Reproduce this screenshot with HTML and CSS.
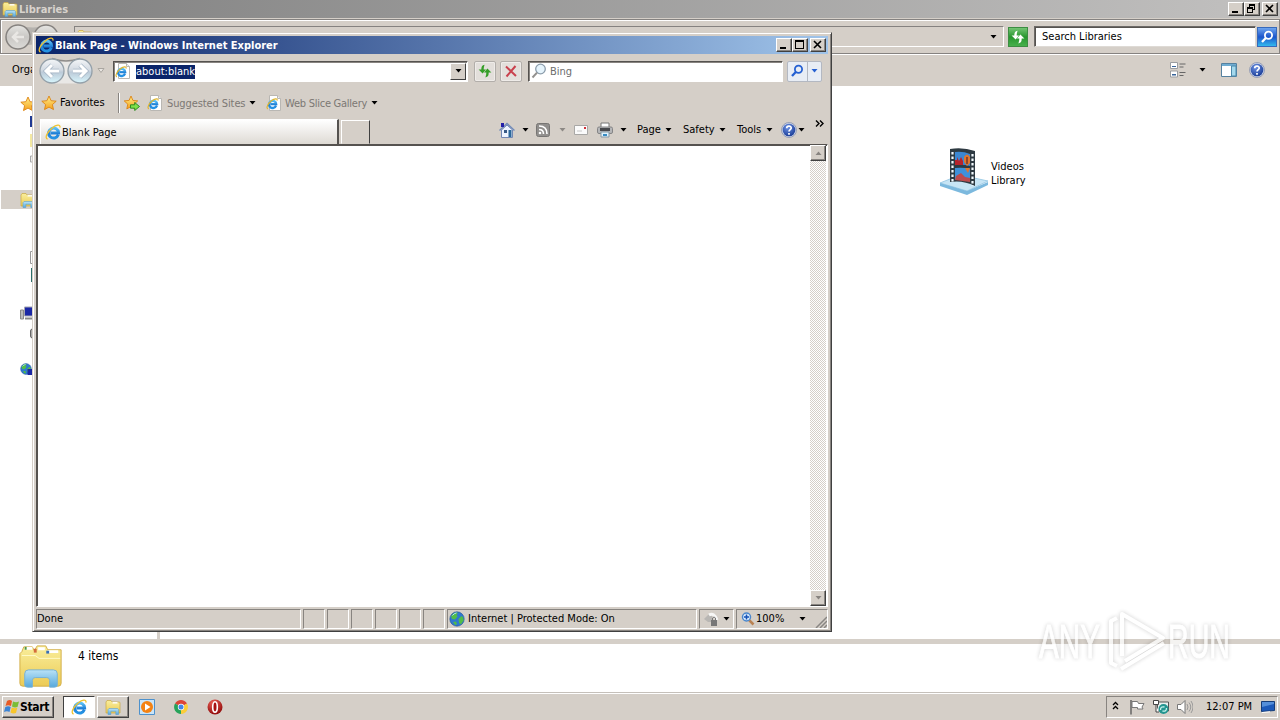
FILE: index.html
```
<!DOCTYPE html>
<html lang="en">
<head>
    <meta charset="UTF-8">
    <meta name="viewport" content="width=device-width, initial-scale=1.0">
    <title>Desktop</title>
    <link rel="stylesheet" href="styles.css">
</head>
<body>
    <!-- Shared icons -->
    <svg class="defs" width="0" height="0">
        <defs>
            <linearGradient id="gOrb" x1="0" y1="0" x2="0" y2="1">
                <stop offset="0" stop-color="#f4f6f8"/><stop offset=".45" stop-color="#d3dae2"/><stop offset=".55" stop-color="#bccad8"/><stop offset="1" stop-color="#d8f6fd"/>
            </linearGradient>
            <linearGradient id="gGray" x1="0" y1="0" x2="0" y2="1">
                <stop offset="0" stop-color="#e6e5e3"/><stop offset=".5" stop-color="#c9c7c4"/><stop offset="1" stop-color="#dcdbd8"/>
            </linearGradient>
            <linearGradient id="gStar" x1="0" y1="0" x2="0" y2="1">
                <stop offset="0" stop-color="#fff08a"/><stop offset="1" stop-color="#f5a01c"/>
            </linearGradient>
            <linearGradient id="gFolder" x1="0" y1="0" x2="0" y2="1">
                <stop offset="0" stop-color="#f9ee9c"/><stop offset="1" stop-color="#eccb55"/>
            </linearGradient>
            <linearGradient id="gBlue" x1="0" y1="0" x2="0" y2="1">
                <stop offset="0" stop-color="#b9e2f7"/><stop offset="1" stop-color="#57a9dc"/>
            </linearGradient>
            <linearGradient id="gE" x1="0" y1="0" x2="0" y2="1">
                <stop offset="0" stop-color="#5cc0f4"/><stop offset=".55" stop-color="#1f7fd6"/><stop offset="1" stop-color="#2593e4"/>
            </linearGradient>
            <radialGradient id="gHelp" cx=".4" cy=".3" r=".8">
                <stop offset="0" stop-color="#6d92e4"/><stop offset="1" stop-color="#12348f"/>
            </radialGradient>
            <radialGradient id="gRed" cx=".4" cy=".25" r=".8">
                <stop offset="0" stop-color="#ee6258"/><stop offset="1" stop-color="#8c0606"/>
            </radialGradient>

            <symbol id="ie" viewBox="0 0 16 16">
                <path d="M13.300 10.800A5 5 0 1 1 13.600 8.900H5.500" fill="none" stroke="url(#gE)" stroke-width="3"/>
                <path d="M2.600 15C-.8 14.200 2.400 7.600 7.200 3.900 11 .9 15.700-.2 14.900 3.600" fill="none" stroke="#f0c22e" stroke-width="1.300"/>
            </symbol>
            <symbol id="iepage" viewBox="0 0 16 16">
                <path d="M3.500.5h8l3 3v12h-11z" fill="#fff" stroke="#b9b7b3"/>
                <path d="M11.500.5v3h3" fill="#eee" stroke="#b9b7b3"/>
                <path d="M10 10.600A3.600 3.600 0 1 1 10.200 9.200H4.500" fill="none" stroke="url(#gE)" stroke-width="2.300"/>
                <path d="M1.800 14C-.2 12.800 2 8.400 5.400 5.800 8.400 3.600 11.800 3 11 5.600" fill="none" stroke="#dfb42c" stroke-width="1.100"/>
            </symbol>
            <symbol id="star" viewBox="0 0 16 16">
                <path d="M8 1l2.100 4.700 5.100.5-3.800 3.400 1.100 5L8 12.100l-4.500 2.500 1.100-5L.8 6.200l5.100-.5z" fill="url(#gStar)" stroke="#dd8313" stroke-width=".9"/>
            </symbol>
            <symbol id="staradd" viewBox="0 0 16 16">
                <path d="M7 1l1.900 4.400 4.800.5-3.600 3.300 1 4.700L7 11.600l-4.200 2.300 1-4.700L.2 5.900l4.900-.5z" fill="url(#gStar)" stroke="#dd8313" stroke-width=".9"/>
                <path d="M6.500 9.800h4.200V7.500l4.800 4-4.800 4v-2.300H6.500z" fill="#7ee04a" stroke="#23861d" stroke-width=".9"/>
            </symbol>
            <symbol id="folder" viewBox="0 0 16 16">
                <path d="M1 14V3l1-1.500h4L7 3h7.600L15 4v10z" fill="url(#gFolder)" stroke="#c9a844" stroke-width=".7"/>
                <path d="M7.500 3.800h5" stroke="#fff" stroke-width="1.400"/>
                <path d="M3 15.500v-4.800L4 9.500h8.600l1 1.200v4.800h-2.800v-3.200H5.800v3.200z" fill="url(#gBlue)" stroke="#5a9ecb" stroke-width=".6"/>
            </symbol>
            <symbol id="help" viewBox="0 0 16 16">
                <circle cx="8" cy="8" r="7.500" fill="#c9d2e6" stroke="#8a93ad" stroke-width=".8"/>
                <circle cx="8" cy="8" r="6.300" fill="url(#gHelp)"/>
                <path d="M5.700 6.200C5.800 3.400 10.400 3.600 10.200 6.200 10 7.700 8 7.800 8 9.600M8 11v1.700" fill="none" stroke="#fff" stroke-width="1.700"/>
            </symbol>
            <symbol id="globe" viewBox="0 0 16 16">
                <circle cx="8" cy="8" r="7.200" fill="#2f78d0" stroke="#1d4f94" stroke-width=".6"/>
                <path d="M2 5l3-3 4-.6L7.600 4l1 1.600L6 8.400 3 8zM9.500 8l3-3 1.600 1.200.6 3-2.600 4-2-1zM4 11l3-.6 1 2.600-1.600 1.200z" fill="#51bd48"/>
                <path d="M3.500 4.500a6 6 0 0 1 4-2.600" stroke="#b7e4ff" fill="none"/>
            </symbol>
            <symbol id="down" viewBox="0 0 7 4"><path d="M.5 0h6L3.500 3.600z" fill="currentColor"/></symbol>
            <symbol id="lens" viewBox="0 0 16 16">
                <circle cx="9.500" cy="6.200" r="3.600" fill="none" stroke="currentColor" stroke-width="1.800"/>
                <path d="M6.800 9L3 13" stroke="currentColor" stroke-width="2.300"/>
            </symbol>
            <symbol id="swap" viewBox="0 0 16 16">
                <path d="M7.600 1.800C5 2 4.300 3.800 4.300 6.600H1.600l4 4 3.400-4H6.700C6.700 4.800 7 3.600 7.600 1.800z" fill="currentColor"/>
                <path d="M8.400 14.400c2.600-.2 3.300-2 3.300-4.800h2.700l-4-4-3.400 4h2.300c0 1.800-.3 3-.9 4.800z" fill="currentColor"/>
            </symbol>
            <symbol id="min" viewBox="0 0 14 12"><path d="M3 8h6v2H3z"/></symbol>
            <symbol id="max" viewBox="0 0 14 12"><path d="M2 1h9v9H2zM3 3v6h7V3z" fill-rule="evenodd"/></symbol>
            <symbol id="restore" viewBox="0 0 14 12"><path d="M4 1h6v6H8v3H2V4h2zM5 3v1h3v2h1V3zM3 6v3h4V6z" fill-rule="evenodd"/></symbol>
            <symbol id="close" viewBox="0 0 14 12"><path d="M3 2l7 7M10 2L3 9" stroke="#000" stroke-width="1.600"/></symbol>
        </defs>
    </svg>

    <div class="desktop">
        <!-- Libraries window -->
        <div class="explorer">
            <div class="ex-title">
                <svg class="i16"><use href="#folder"/></svg>
                <span>Libraries</span>
                <div class="win-buttons">
                    <i><svg><use href="#min"/></svg></i><i><svg><use href="#restore"/></svg></i><i><svg><use href="#close"/></svg></i>
                </div>
            </div>
            <div class="ex-nav">
                <svg class="ex-arrows" viewBox="0 0 60 28">
                    <path d="M14 2q15 5 30 0v22q-15-5-30 0z" fill="#b5b2ae"/>
                    <circle cx="14" cy="14" r="12" fill="url(#gGray)" stroke="#85827f" stroke-width="1.500"/>
                    <circle cx="42" cy="14" r="12" fill="url(#gGray)" stroke="#85827f" stroke-width="1.500"/>
                    <path d="M20 14H9M14 9l-5 5 5 5" fill="none" stroke="#e9e7e4" stroke-width="2.500"/>
                </svg>
                <div class="ex-address">
                    <svg class="i16"><use href="#folder"/></svg>
                    <svg class="drop"><use href="#down"/></svg>
                </div>
                <div class="ex-refresh"><svg class="i16"><use href="#swap"/></svg></div>
                <div class="ex-search">Search Libraries</div>
                <div class="ex-go"><svg class="i16"><use href="#lens"/></svg></div>
            </div>
            <div class="ex-toolbar">
                <span>Organize</span>
                <svg class="i16 view" viewBox="0 0 16 16">
                    <path d="M.5.500h7v6h-7zM.5 9h7v6h-7z" fill="#fff" stroke="#9b9da0"/>
                    <path d="M2 4h4v1H2zM2 12h4v1.500H2z" fill="#38649a"/>
                    <path d="M9.500 2h6M9.500 5h4M9.500 10.500h6M9.500 13.500h4" stroke="#666"/>
                </svg>
                <svg class="drop"><use href="#down"/></svg>
                <svg class="i16 pane" viewBox="0 0 16 16">
                    <path d="M.5 1.500h15v13H.5z" fill="#fff" stroke="#55819f"/>
                    <path d="M1 2h14v2H1z" fill="#6facd1"/><path d="M10.500 4h4.500v10h-4.500z" fill="#a4d9ed" stroke="#4a88aa"/>
                </svg>
                <svg class="i16"><use href="#help"/></svg>
            </div>
            <div class="ex-body">
                <div class="tree">
                    <div class="row fav"><svg class="i16"><use href="#star"/></svg></div>
                    <div class="row child"><svg viewBox="0 0 12 16"><path d="M0 2h12v11H0z" fill="#203a93"/></svg></div>
                    <div class="row child"><svg viewBox="0 0 12 16"><path d="M0 2h12v13H0z" fill="#f3e8a2"/></svg></div>
                    <div class="row child"><svg viewBox="0 0 12 16"><path d="M.5 6h11v6H.5z" fill="#eee" stroke="#aaa"/></svg></div>
                    <div class="row selected"><svg class="i16"><use href="#folder"/></svg></div>
                    <div class="row child docs"><svg viewBox="0 0 12 16"><path d="M.5 2.500h11v12H.5z" fill="#fff" stroke="#999"/></svg></div>
                    <div class="row child"><svg viewBox="0 0 12 16"><path d="M1 1h12v14H1z" fill="#2c6f6b"/></svg></div>
                    <div class="row computer"><svg class="i16" viewBox="0 0 16 16"><path d="M.5 5h3v9h-3z" fill="#bbb" stroke="#888"/><path d="M4.500 2h11v9h-11z" fill="#1a27a5" stroke="#a3a4b1"/><path d="M5 13.500h9" stroke="#888" stroke-width="2"/></svg></div>
                    <div class="row child"><svg viewBox="0 0 12 16"><rect x=".5" y="6" width="12" height="9" rx="2" fill="#aaa" stroke="#666"/></svg></div>
                    <div class="row network"><svg class="i12"><use href="#globe"/></svg><svg class="net" viewBox="0 0 8 8"><path d="M0 0h8v6H0z" fill="#1a27a5"/></svg></div>
                </div>
                <div class="files">
                    <div class="library">
                        <svg viewBox="0 0 48 48">
                            <path d="M0 35L20 27l28 6-21 10z" fill="#c7e5f5" stroke="#a0cde6"/>
                            <path d="M0 35l27 8v4L0 38zM27 43l21-9v3L27 47z" fill="#7cb9de"/>
                            <path d="M10 1q13-2 25 2v35q-12-6-25-4z" fill="#2e3a42"/>
                            <path d="M15 4q8-1 15 2v12q-7-2-15-1z" fill="#3c87d2"/>
                            <path d="M15 20q8-1 15 1v13q-7-3-15-2z" fill="#3f91da"/>
                            <path d="M15 12h2v-3l2 4 2-4 2 4v4h-8z" fill="#b6232c"/>
                            <path d="M24 9q3-5 6 0v6l-3 3-3-4zM25 20h5l-2 5z" fill="#e0762e"/>
                            <path d="M27 9v7" stroke="#7b3426" stroke-width="1.500"/>
                            <path d="M16 28l5-3 4 4 5 1v4l-15-2z" fill="#bd4b4d"/>
                            <path d="M12.500 4v31M32.500 6v32" stroke="#f4fbff" stroke-width="2.200" stroke-dasharray="2.500 2"/>
                        </svg>
                        <span>Videos<br>Library</span>
                    </div>
                </div>
            </div>
            <div class="ex-details">
                <svg viewBox="0 0 48 48">
                    <path d="M4 8l2-5h9l2 4 3-5h9l2 4h14v35q0 3-3 3H5q-3 0-3-3V10z" fill="url(#gFolder)" stroke="#d2ae48"/>
                    <path d="M7 4.500h8M21 5h7M31 8h11" stroke="#fff" stroke-width="3"/>
                    <path d="M8 3v3" stroke="#4d9a46" stroke-width="2"/><path d="M18 5v4" stroke="#d46d3d" stroke-width="3"/><path d="M31 7v3" stroke="#386fb7" stroke-width="3"/>
                    <path d="M4 12h14l4 3h22" stroke="#fffbc8" fill="none"/>
                    <path d="M7 43V31q0-4 4-4h26q4 0 4 4v12q0 2-3 2h-5v-7q0-3-3-3H18q-3 0-3 3v7h-5q-3 0-3-2z" fill="url(#gBlue)" stroke="#76b2d6"/>
                </svg>
                <span>4 items</span>
            </div>
        </div>

        <!-- Internet Explorer window -->
        <div class="ie">
            <div class="ie-title">
                <svg class="i16"><use href="#ie"/></svg>
                <span>Blank Page - Windows Internet Explorer</span>
                <div class="win-buttons">
                    <i><svg><use href="#min"/></svg></i><i><svg><use href="#max"/></svg></i><i><svg><use href="#close"/></svg></i>
                </div>
            </div>
            <div class="ie-nav">
                <svg class="ie-arrows" viewBox="0 0 56 28">
                    <path d="M14 1.500q14 5 28 0v25H14z" fill="#e9e8e6"/>
                    <path d="M14 1.500q14 5 28 0" fill="none" stroke="#8f8d8b" stroke-width="1.500"/>
                    <circle cx="14" cy="14" r="12" fill="url(#gOrb)" stroke="#94a0a9" stroke-width="1.300"/>
                    <circle cx="42" cy="14" r="12" fill="url(#gOrb)" stroke="#94a0a9" stroke-width="1.300"/>
                    <path d="M21 14H9M14 8l-6 6 6 6M35 14h12M42 8l6 6-6 6" fill="none" stroke="#a3b3c3" stroke-width="4.400"/>
                    <path d="M21 14H9M14 8l-6 6 6 6M35 14h12M42 8l6 6-6 6" fill="none" stroke="#fff" stroke-width="3"/>
                </svg>
                <svg class="history" viewBox="0 0 8 6"><path d="M1 .5h6L4 4.500z" fill="#e8e5e1" stroke="#aaa6a1"/></svg>
                <div class="address">
                    <svg class="i16"><use href="#iepage"/></svg>
                    <span>about:blank</span>
                    <b><svg class="drop"><use href="#down"/></svg></b>
                </div>
                <div class="nav-btn refresh"><svg class="i16"><use href="#swap"/></svg></div>
                <div class="nav-btn"><svg class="i16" viewBox="0 0 16 16"><path d="M3 3.500l10 9.500M12.500 3L3.500 13.500" stroke="#c9414d" stroke-width="2"/></svg></div>
                <div class="search">
                    <svg class="i16" viewBox="0 0 16 16"><circle cx="9.500" cy="6" r="4.800" fill="#e6f4fc" stroke="#8b9cab" stroke-width="1.300"/><path d="M6 9.600L1.500 14.500" stroke="#92908e" stroke-width="2"/></svg>
                    <span>Bing</span>
                </div>
                <div class="search-btn">
                    <svg class="i16"><use href="#lens"/></svg>
                    <b><svg class="drop"><use href="#down"/></svg></b>
                </div>
            </div>
            <div class="fav-bar">
                <svg class="i16"><use href="#star"/></svg>
                <span class="fav-text">Favorites</span>
                <i class="sep"></i>
                <svg class="i16"><use href="#staradd"/></svg>
                <svg class="i16 sug"><use href="#iepage"/></svg>
                <span class="gray sug-text">Suggested Sites</span>
                <svg class="drop"><use href="#down"/></svg>
                <svg class="i16 web"><use href="#iepage"/></svg>
                <span class="gray web-text">Web Slice Gallery</span>
                <svg class="drop"><use href="#down"/></svg>
            </div>
            <div class="tab-bar">
                <div class="tab"><svg class="i16"><use href="#ie"/></svg><span>Blank Page</span></div>
                <div class="new-tab"></div>
                <div class="commands">
                    <div class="cmd home">
                        <svg class="i16" viewBox="0 0 16 16"><path d="M2.500 8v7.500h11V8L8 3z" fill="#edf4ff" stroke="#7287b3"/><path d="M.5 8.500L8 1.500l7.500 7" fill="none" stroke="#718bb9" stroke-width="1.400"/><path d="M2 1h3v4H2z" fill="#2220a8"/><path d="M5 8h3v3H5z" fill="#385a86"/><path d="M9.500 8h3v7h-3z" fill="#2c689b"/></svg>
                        <svg class="drop"><use href="#down"/></svg>
                    </div>
                    <div class="cmd rss">
                        <svg class="i14" viewBox="0 0 14 14"><rect x=".5" y=".5" width="13" height="13" rx="2" fill="#918f8d" stroke="#777573"/><path d="M3 3q8 0 8 8M3 6.500q4.500 0 4.500 4.500" fill="none" stroke="#fff" stroke-width="1.600"/><circle cx="4" cy="10" r="1.300" fill="#fff"/></svg>
                        <svg class="drop"><use href="#down"/></svg>
                    </div>
                    <svg class="mail" viewBox="0 0 14 12"><path d="M.5 1.500h13v9H.5z" fill="#fbfbfb" stroke="#a9a8a6"/><path d="M10 3h2v2h-2z" fill="#d03038"/><path d="M3 7h5" stroke="#c8c8c8"/></svg>
                    <div class="cmd print">
                        <svg class="i16" viewBox="0 0 16 16"><path d="M4 1h8v5H4z" fill="#fff" stroke="#777"/><rect x=".5" y="5" width="15" height="6.500" rx="1.500" fill="#b5b6b8" stroke="#858586"/><path d="M3 6h10v3H3z" fill="#48494d"/><path d="M4 10h8v5H4z" fill="#dff2fd" stroke="#8699a5"/><path d="M6 12h4v2H6z" fill="#388cc3"/></svg>
                        <svg class="drop"><use href="#down"/></svg>
                    </div>
                    <div class="cmd page"><span>Page</span><svg class="drop"><use href="#down"/></svg></div>
                    <div class="cmd safety"><span>Safety</span><svg class="drop"><use href="#down"/></svg></div>
                    <div class="cmd tools"><span>Tools</span><svg class="drop"><use href="#down"/></svg></div>
                    <div class="cmd helper"><svg class="i16"><use href="#help"/></svg><svg class="drop"><use href="#down"/></svg></div>
                    <svg class="more" viewBox="0 0 9 7"><path d="M1 .500l3 3-3 3M5 .500l3 3-3 3" fill="none" stroke="#000" stroke-width="1.400"/></svg>
                </div>
            </div>
            <div class="view-area">
                <div class="blank"></div>
                <div class="scroll">
                    <i><svg class="drop up"><use href="#down"/></svg></i>
                    <i><svg class="drop"><use href="#down"/></svg></i>
                </div>
            </div>
            <div class="status">
                <div class="cell done">Done</div>
                <div class="cell small"></div><div class="cell small"></div><div class="cell small"></div>
                <div class="cell small"></div><div class="cell small"></div><div class="cell small"></div>
                <div class="cell zone"><svg class="i16"><use href="#globe"/></svg><span>Internet | Protected Mode: On</span></div>
                <div class="cell lock">
                    <svg class="i16" viewBox="0 0 16 16"><path d="M1 8l5-5 3 2v6H5z" fill="#b8b6b3"/><path d="M6 4q5-3 8 5" fill="none" stroke="#f7f7f6" stroke-width="3"/><path d="M8 9h6v6H8z" fill="#777"/><path d="M9.500 9V7q1.500-2 3 0v2" fill="none" stroke="#777"/></svg>
                    <svg class="drop"><use href="#down"/></svg>
                </div>
                <div class="cell zoom">
                    <svg class="i14" viewBox="0 0 14 14"><path d="M8 8l4.500 4.500" stroke="#b98252" stroke-width="2.500"/><circle cx="5.500" cy="5" r="4" fill="#e1f1ff" stroke="#4b87cc" stroke-width="1.500"/><path d="M5.500 2.500v5M3 5h5" stroke="#1552b7" stroke-width="1.600"/></svg>
                    <span>100%</span>
                    <svg class="drop"><use href="#down"/></svg>
                    <svg class="grip" viewBox="0 0 12 12"><path d="M1 12L12 1M5 12l7-7M9 12l3-3" stroke="#898683" stroke-width="1.500"/></svg>
                </div>
            </div>
        </div>

        <!-- Watermark -->
        <svg class="watermark" viewBox="0 0 212 72">
            <text x="3" y="52" textLength="61" lengthAdjust="spacingAndGlyphs">ANY</text>
            <path d="M86 50V8l41 24-38 23M81 12l-6 3v42l6 3M85 63l43-26"/>
            <text x="132" y="52" textLength="62" lengthAdjust="spacingAndGlyphs">RUN</text>
        </svg>

        <!-- Taskbar -->
        <div class="taskbar">
            <div class="start">
                <svg viewBox="0 0 16 16"><path d="M3 2q3-2 5 0L7 7Q4 5.500 1.500 7z" fill="#e75b26"/><path d="M9 2.500q3 1.500 6 0L13.500 8q-3 1-5.500-.5z" fill="#7abd37"/><path d="M1.300 8q3-1.500 5.400 0l-1.200 5Q3 11.500 0 13z" fill="#3b84d5"/><path d="M7.800 8.600q3 1.200 5.500.2L12 14q-3 1-5.500-.6z" fill="#f8c62b"/></svg>
                <span>Start</span>
            </div>
            <div class="task active"><svg class="i16"><use href="#ie"/></svg></div>
            <div class="task"><svg class="i16"><use href="#folder"/></svg></div>
            <svg class="i16 player" viewBox="0 0 16 16"><path d="M.5.500h15v15H.5z" fill="#cae5f8" stroke="#4d91cc"/><circle cx="8" cy="8" r="6" fill="#f48212"/><path d="M6 4.500v7L11.500 8z" fill="#fff"/></svg>
            <svg class="chrome" viewBox="0 0 14 14"><path d="M7 7L1 3.500A7 7 0 0 1 13 3.500z" fill="#dc4437"/><path d="M7 7v7A7 7 0 0 1 1 3.500z" fill="#27a35a"/><path d="M7 7l6-3.500A7 7 0 0 1 7 14z" fill="#fbcd38"/><circle cx="7" cy="7" r="3.200" fill="#fff"/><circle cx="7" cy="7" r="2.500" fill="#4285e8"/></svg>
            <svg class="i16 opera" viewBox="0 0 16 16"><circle cx="8" cy="8" r="7.500" fill="url(#gRed)"/><ellipse cx="8" cy="8" rx="2.300" ry="5.200" fill="#a81111" stroke="#fff" stroke-width="1.600"/></svg>
            <div class="tray">
                <svg class="chev" viewBox="0 0 7 9"><path d="M1 4l2.500-2.500L6 4M1 8l2.500-2.500L6 8" fill="none" stroke="#000" stroke-width="1.300"/></svg>
                <svg class="i16 flag" viewBox="0 0 16 16"><path d="M2 1v14.500" stroke="#666" stroke-width="1.500"/><path d="M3 2.500h5.500l1 2H15l-2 3.500 1 2H8.500V8.500H3z" fill="#fff" stroke="#777"/></svg>
                <svg class="i16 lan" viewBox="0 0 16 16"><path d="M4.500 3h11v9h-11z" fill="#e9f0ef" stroke="#555"/><path d="M.5 1.500h5v4h-5zM3 6v7h3" fill="#fff" stroke="#444"/><circle cx="10.500" cy="10" r="5" fill="#239590"/><path d="M7.500 11q0-4 4-3M13.500 9q0 4-4 3" fill="none" stroke="#c8f3ed" stroke-width="1.300"/></svg>
                <svg class="i16 sound" viewBox="0 0 16 16"><path d="M.5 5.500H4l4-4v13l-4-4H.5z" fill="#fff" stroke="#777"/><path d="M10 5q2 3 0 6M12 3.500q3.500 4.500 0 9M14 2q4 6 0 12" fill="none" stroke="#999"/></svg>
                <span>12:07 PM</span>
                <svg class="show" viewBox="0 0 14 12"><path d="M.5.500h13v9l-13 1z" fill="#1c59b9" stroke="#153c78"/><path d="M1 1h12v2L1 6z" fill="#548ed9"/><path d="M1 11.500l8-.7" stroke="#fff"/></svg>
            </div>
        </div>
    </div>
</body>
</html>
```

FILE: styles.css
```
/* General Styles */
* {
    box-sizing: border-box;
}

body {
    margin: 0;
    font-family: "DejaVu Sans Condensed", "DejaVu Sans", sans-serif;
    font-stretch: condensed;
    font-size: 11px;
    line-height: 14px;
    color: #000;
    overflow: hidden;
}

svg {
    display: block;
    flex: none;
}

span {
    white-space: nowrap;
}

.defs {
    position: absolute;
}

.desktop {
    position: relative;
    width: 1280px;
    height: 720px;
    background: #d5cfc8;
}

.i16 {
    width: 16px;
    height: 16px;
}

.i14 {
    width: 14px;
    height: 14px;
}

.i12 {
    width: 12px;
    height: 12px;
}

.drop {
    width: 7px;
    height: 4px;
}

.win-buttons {
    display: flex;
    margin-left: auto;
}

.win-buttons i {
    width: 16px;
    height: 14px;
    background: #d5cfc8;
    border: 1px solid;
    border-color: #fff #404040 #404040 #fff;
    box-shadow: inset -1px -1px #888480;
}

.win-buttons i:last-child {
    margin-left: 2px;
}

.win-buttons svg {
    width: 14px;
    height: 12px;
}

/* Libraries window */
.explorer {
    position: absolute;
    left: 0;
    top: 0;
    width: 1280px;
    height: 693px;
    display: flex;
    flex-direction: column;
}

.ex-title {
    height: 18px;
    display: flex;
    align-items: center;
    padding: 0 2px;
    background: linear-gradient(90deg, #808080, #c2c1c0);
    color: #d8d3cd;
    font-weight: bold;
}

.ex-title span {
    margin-left: 1px;
    padding-top: 1px;
}

.ex-nav {
    height: 35px;
    margin-top: 1px;
    display: flex;
    align-items: center;
    border: 1px solid #858280;
    box-shadow: inset 1px 1px #fff, 0 1px #fff;
    padding-left: 3px;
}

.ex-arrows {
    width: 60px;
    height: 28px;
}

.ex-address {
    width: 930px;
    height: 21px;
    margin-left: 10px;
    display: flex;
    align-items: center;
    justify-content: space-between;
    padding: 0 6px 0 2px;
    border: 1px solid #858280;
    border-bottom-color: #fff;
    border-right-color: #fff;
}

.ex-refresh, .ex-go {
    width: 20px;
    height: 20px;
    display: flex;
    align-items: center;
    justify-content: center;
    color: #fff;
}

.ex-refresh {
    margin-left: 4px;
    background: linear-gradient(#74c474, #27962e 50%, #46b04b);
    border: 1px solid #3c8d42;
}

.ex-search {
    width: 222px;
    height: 21px;
    margin-left: 6px;
    padding: 3px 7px 0;
    background: #fff;
    border: 1px solid;
    border-color: #6d6a67 #dedad5 #dedad5 #6d6a67;
    box-shadow: inset 1px 1px #55524f;
}

.ex-go {
    margin-left: 1px;
    background: linear-gradient(#6da4ee, #1c55cc 50%, #32b9ee);
    border: 1px solid #3769ba;
}

.ex-toolbar {
    height: 32px;
    display: flex;
    align-items: center;
    padding: 0 15px 0 12px;
}

.ex-toolbar .view {
    margin-left: auto;
}

.ex-toolbar .drop {
    margin-left: 13px;
}

.ex-toolbar .pane {
    margin: 0 12px 0 15px;
}

.ex-body {
    height: 553px;
    display: flex;
    background: #fff;
}

.tree {
    width: 160px;
    border-right: 3px solid #d5cfc8;
    padding: 9px 0 0 1px;
}

.row {
    height: 18px;
    display: flex;
    align-items: center;
    padding-left: 19px;
}

.row.child {
    padding-left: 29px;
}

.row.child svg {
    width: 12px;
    height: 16px;
}

.row.selected {
    margin-top: 23px;
    width: 150px;
    height: 19px;
    background: #d5cfc8;
}

.row.docs {
    margin-top: 39px;
}

.row.computer {
    margin-top: 20px;
}

.row.network {
    margin-top: 20px;
}

.net {
    width: 9px;
    height: 8px;
    margin: 7px 0 0 -5px;
}

.files {
    flex: 1;
    padding: 62px 0 0 780px;
}

.library {
    display: flex;
    gap: 3px;
}

.library svg {
    width: 48px;
    height: 48px;
}

.library span {
    margin-top: 12px;
}

.ex-details {
    height: 54px;
    display: flex;
    background: #fff;
    border-top: 5px solid #d5cfc8;
    border-bottom: 1px solid #c5c0ba;
    padding-left: 17px;
}

.ex-details svg {
    width: 48px;
    height: 46px;
}

.ex-details span {
    margin: 5px 0 0 13px;
    font-size: 12px;
}

/* Internet Explorer window */
.ie {
    position: absolute;
    left: 32px;
    top: 32px;
    width: 800px;
    height: 600px;
    display: flex;
    flex-direction: column;
    padding: 2px 3px 1px;
    background: #d5cfc8;
    border: 1px solid;
    border-color: #d5cfc8 #404040 #404040 #d5cfc8;
    box-shadow: inset 1px 1px #fff, inset -1px -1px #888480;
}

.ie-title {
    height: 18px;
    margin-top: 1px;
    display: flex;
    align-items: center;
    padding: 0 2px;
    background: linear-gradient(90deg, #0a246a, #a0c4ea);
    color: #fff;
    font-weight: bold;
}

.ie-title span {
    margin-left: 1px;
    padding-top: 1px;
}

.ie-nav {
    height: 34px;
    display: flex;
    align-items: center;
    padding-left: 2px;
}

.ie-arrows {
    width: 56px;
    height: 28px;
}

.history {
    width: 8px;
    height: 6px;
    margin-left: 3px;
}

.address, .search {
    height: 21px;
    display: flex;
    align-items: center;
    background: #fff;
    border: 1px solid;
    border-color: #55524f #fff #fff #55524f;
    box-shadow: inset 1px 1px #888480;
}

.address {
    width: 355px;
    margin-left: 8px;
}

.address .i16 {
    margin-left: 1px;
}

.address span {
    margin-left: 5px;
    margin-top: 1px;
    background: #0a246a;
    color: #fff;
}

.address b {
    width: 16px;
    height: 17px;
    margin-left: auto;
    margin-right: 1px;
    display: flex;
    align-items: center;
    justify-content: center;
    background: #d5cfc8;
    border: 1px solid;
    border-color: #fff #404040 #404040 #fff;
}

.nav-btn {
    width: 22px;
    height: 21px;
    margin-left: 4px;
    display: flex;
    align-items: center;
    justify-content: center;
    background: #e3dfdb;
    border: 1px solid #b2aeaa;
    border-radius: 2px;
    box-shadow: inset 0 0 0 1px #efece9;
}

.refresh {
    margin-left: 6px;
    color: #369e29;
}

.search {
    width: 255px;
    margin-left: 6px;
}

.search .i16 {
    margin-left: 2px;
}

.search span {
    margin-left: 3px;
    padding-top: 2px;
    color: #6d6d6d;
}

.search-btn {
    width: 35px;
    height: 21px;
    margin-left: 4px;
    display: flex;
    align-items: center;
    background: #e8edf5;
    border: 1px solid #b3b8c2;
    border-radius: 2px;
    color: #2560d2;
}

.search-btn .i16 {
    margin: 0 2px 0 1px;
}

.search-btn b {
    height: 19px;
    display: flex;
    align-items: center;
    border-left: 1px solid #b3b8c2;
    padding-left: 3px;
}

.fav-bar {
    height: 30px;
    display: flex;
    align-items: center;
    padding-left: 5px;
}

.fav-text {
    width: 58px;
    margin-left: 3px;
}

.sep {
    width: 2px;
    height: 20px;
    border-left: 1px solid #888480;
    border-right: 1px solid #fff;
    margin-right: 4px;
}

.gray {
    color: #7c7874;
    padding-top: 1px;
}

.sug {
    margin-left: 7px;
}

.sug-text {
    width: 82px;
    margin-left: 4px;
    letter-spacing: -0.1px;
}

.web {
    margin-left: 10px;
}

.web-text {
    width: 86px;
    margin-left: 3px;
    letter-spacing: -0.25px;
}

.tab-bar {
    height: 26px;
    display: flex;
    align-items: flex-end;
    padding-left: 4px;
}

.tab {
    width: 299px;
    height: 25px;
    display: flex;
    align-items: center;
    padding-left: 4px;
    background: linear-gradient(#fff, #dedad4);
    border-top: 1px solid #fff;
    border-left: 1px solid #fff;
    border-right: 2px solid #55524f;
}

.tab span {
    margin-left: 1px;
    padding-top: 1px;
}

.new-tab {
    width: 29px;
    height: 24px;
    margin-left: 2px;
    border: 1px solid;
    border-color: #fff #404040 transparent #fff;
}

.commands {
    height: 28px;
    margin-left: 129px;
    display: flex;
    align-items: center;
}

.cmd {
    display: flex;
    align-items: center;
}

.home {
    width: 37px;
    gap: 7px;
}

.rss {
    width: 38px;
    gap: 9px;
}

.rss .drop {
    color: #8d8985;
}

.mail {
    width: 14px;
    height: 12px;
}

.print {
    margin-left: 9px;
    width: 40px;
    gap: 7px;
}

.cmd span {
    margin-right: auto;
}

.page {
    width: 35px;
    margin-right: 11px;
}

.safety {
    width: 43px;
    margin-right: 11px;
}

.tools {
    width: 36px;
    margin-right: 8px;
}

.helper {
    width: 34px;
    gap: 1px;
}

.more {
    width: 9px;
    height: 7px;
    margin-bottom: 13px;
}

.view-area {
    height: 463px;
    display: flex;
    background: #fff;
    border: 1px solid;
    border-color: #55524f #fff #fff #55524f;
    box-shadow: inset 1px 1px #55524f;
}

.blank {
    flex: 1;
}

.scroll {
    width: 16px;
    margin: 0 1px 0 0;
    display: flex;
    flex-direction: column;
    justify-content: space-between;
    background: repeating-conic-gradient(#d5cfc8 0 25%, #fff 0 50%) 0 0 / 2px 2px;
}

.scroll i {
    height: 16px;
    display: flex;
    align-items: center;
    justify-content: center;
    background: #d5cfc8;
    border: 1px solid;
    border-color: #fff #404040 #404040 #fff;
    box-shadow: inset -1px -1px #888480;
    color: #888480;
}

.up {
    transform: rotate(180deg);
}

.status {
    height: 20px;
    margin-top: 2px;
    display: flex;
    gap: 2px;
}

.cell {
    display: flex;
    align-items: center;
    border: 1px solid;
    border-color: #888480 #fff #fff #888480;
}

.done {
    width: 265px;
    padding-left: 0;
}

.small {
    width: 22px;
}

.zone {
    width: 250px;
    padding-left: 1px;
}

.zone span {
    margin-left: 3px;
}

.lock {
    width: 35px;
    padding-left: 3px;
    gap: 4px;
}

.zoom {
    flex: 1;
    padding-left: 4px;
}

.zoom span {
    width: 43px;
    margin-left: 1px;
}

.grip {
    width: 12px;
    height: 12px;
    margin: 5px 0 0 auto;
}

/* Watermark */
.watermark {
    position: absolute;
    left: 1036px;
    top: 606px;
    width: 212px;
    height: 72px;
    font-family: "Liberation Sans", sans-serif;
    font-size: 48px;
    fill: #fff;
    stroke: #fff;
    stroke-width: 1;
    filter: drop-shadow(0 0 2px rgba(0, 0, 0, 0.25));
    opacity: 0.75;
}

.watermark path {
    fill: none;
    stroke-width: 4;
    stroke-linejoin: round;
}

/* Taskbar */
.taskbar {
    position: absolute;
    left: 0;
    top: 693px;
    width: 1280px;
    height: 27px;
    display: flex;
    align-items: center;
    padding: 0 2px;
    background: #d5cfc8;
    border-top: 1px solid #fff;
}

.start, .task {
    height: 22px;
    display: flex;
    align-items: center;
    border: 1px solid;
    border-color: #fff #404040 #404040 #fff;
    box-shadow: inset -1px -1px #888480;
}

.start {
    width: 52px;
    padding-left: 1px;
    font-size: 12px;
    font-weight: bold;
    letter-spacing: -0.3px;
}

.start svg {
    width: 16px;
    height: 16px;
}

.task {
    width: 32px;
    justify-content: center;
    margin-left: 2px;
}

.task.active {
    margin-left: 9px;
    background: #fff;
    border-color: #404040 #fff #fff #404040;
    box-shadow: none;
}

.player {
    margin-left: 10px;
}

.chrome {
    width: 14px;
    height: 14px;
    margin-left: 19px;
}

.opera {
    margin-left: 19px;
}

.tray {
    width: 172px;
    height: 22px;
    margin-left: auto;
    display: flex;
    align-items: center;
    border: 1px solid;
    border-color: #888480 #fff #fff #888480;
    padding-left: 5px;
}

.chev {
    width: 7px;
    height: 9px;
    margin-bottom: 4px;
}

.flag {
    margin-left: 10px;
}

.lan {
    margin-left: 8px;
}

.sound {
    margin-left: 8px;
}

.tray span {
    width: 46px;
    margin-left: 13px;
}

.show {
    width: 14px;
    height: 12px;
    margin-left: auto;
    margin-right: 2px;
}
```
